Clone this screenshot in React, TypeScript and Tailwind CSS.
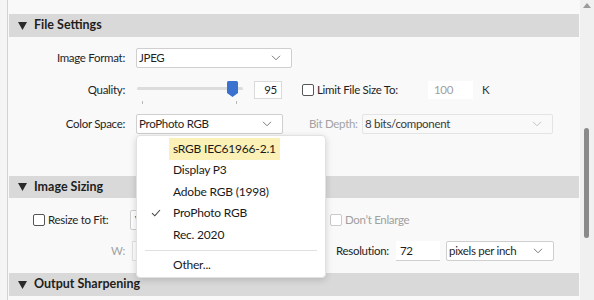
import type { ReactNode } from 'react';

function Chevron({ light = false }: { light?: boolean }) {
  return (
    <svg width="10" height="6" viewBox="0 0 10 6" fill="none" className="shrink-0">
      <path d="M1 0.8l4 4 4-4" stroke={light ? '#c4c4c4' : '#7a7a7a'} strokeWidth="1" />
    </svg>
  );
}

function Select({ value, className, disabled = false }: { value: string; className: string; disabled?: boolean }) {
  return (
    <div
      className={`h-[20px] flex items-center justify-between pl-[2px] pr-[10px] border rounded-[2px] overflow-hidden shrink-0 ${
        disabled ? 'bg-[#f9f9f9] border-[#e4e4e4] text-[#3a3a3a]' : 'bg-white border-[#cfcfcf]'
      } ${className}`}
    >
      <span className="leading-[16px] whitespace-nowrap">{value}</span>
      <Chevron light={disabled} />
    </div>
  );
}

function Checkbox({ disabled = false }: { disabled?: boolean }) {
  return (
    <span
      className={`w-[12px] h-[12px] rounded-[2px] border bg-white shrink-0 ${
        disabled ? 'border-[#c9c9c9]' : 'border-[#555]'
      }`}
    />
  );
}

function Header({ title }: { title: string }) {
  return (
    <div className="flex items-center gap-[7px] pl-[9px] bg-[#d9d9d9] h-full font-bold text-[12.5px] tracking-normal text-[#1e1e1e]">
      <svg width="9" height="8" viewBox="0 0 9 8">
        <path d="M0 0h9L4.5 8z" fill="#2a2a2a" />
      </svg>
      {title}
    </div>
  );
}

function Label({ children, muted = false }: { children: ReactNode; muted?: boolean }) {
  return <span className={`w-[116px] text-right shrink-0 ${muted ? 'text-[#a3a3a3]' : ''}`}>{children}</span>;
}

const colorSpaces = ['sRGB IEC61966-2.1', 'Display P3', 'Adobe RGB (1998)', 'ProPhoto RGB', 'Rec. 2020'];

function Menu() {
  return (
    <div className="absolute left-[128px] top-[135px] w-[190px] h-[143px] bg-white rounded-[4px] border border-[#e2e2e2] shadow-[0_2px_7px_rgba(0,0,0,0.16)] pt-[2px] text-[12px] tracking-[-0.2px] text-[#1a1a1a]">
      {colorSpaces.map((name) => (
        <div key={name} className="h-[21.5px] flex items-center">
          <span className="w-[32px] flex justify-center pl-[5px]">
            {name === 'ProPhoto RGB' && (
              <svg width="10" height="8" viewBox="0 0 10 8" fill="none">
                <path d="M1 4.2l2.8 2.6L9 1" stroke="#444" strokeWidth="1.1" />
              </svg>
            )}
          </span>
          <span
            className={`h-full flex items-center px-[4px] ${
              name === 'sRGB IEC61966-2.1' ? 'bg-[#fbf0b5]' : ''
            }`}
          >
            {name}
          </span>
        </div>
      ))}
      <div className="mx-[8px] mt-[4px] border-t border-[#e0e0e0]" />
      <div className="h-[21px] mt-[4px] flex items-center pl-[36px]">Other...</div>
    </div>
  );
}

export default function App() {
  return (
    <div className="w-[594px] h-[300px] flex overflow-hidden bg-[#f9f9f9] text-[11.5px] tracking-[-0.3px] text-[#1f1f1f] font-['Lato',sans-serif] leading-none">
      <div className="w-[8px] bg-[#f5f5f5] border-r border-[#d2d2d2]" />

      <div className="relative w-[572px] flex flex-col px-[1px]">
        <div className="h-[14px] shrink-0" />
        <div className="h-[23px] shrink-0">
          <Header title="File Settings" />
        </div>

        <div className="h-[139px] shrink-0 pt-[11px] flex flex-col">
          <div className="h-[20px] flex items-center gap-[11px]">
            <Label>Image Format:</Label>
            <Select value="JPEG" className="w-[156px]" />
          </div>

          <div className="h-[20px] mt-[12px] flex items-center">
            <Label>Quality:</Label>
            <div className="relative ml-[12px] w-[106px] h-[20px] shrink-0">
              <div className="absolute left-0 right-0 top-[7px] h-[3px] bg-[#dcdcdc] rounded-full" />
              <svg className="absolute left-[90px] top-[1px]" width="11" height="16" viewBox="0 0 11 16">
                <path d="M1.5 0h8a1.5 1.5 0 0 1 1.5 1.5V12l-5.5 4L0 12V1.5A1.5 1.5 0 0 1 1.5 0z" fill="#3b71cf" />
              </svg>
              <div className="absolute left-[5px] top-[21px] w-px h-[3px] bg-[#b9b9b9]" />
              <div className="absolute left-[99px] top-[21px] w-px h-[3px] bg-[#b9b9b9]" />
            </div>
            <div className="ml-[11px] w-[28px] h-[18px] bg-white border border-[#dadada] flex items-center justify-end pr-[4px] shrink-0">
              95
            </div>
            <div className="ml-[20px] w-[126px] flex items-center gap-[3px] shrink-0">
              <Checkbox />
              <span>Limit File Size To:</span>
            </div>
            <div className="w-[45px] h-[18px] bg-white flex items-center pl-[6px] text-[#a0a0a0] shrink-0">100</div>
            <span className="ml-[9px] text-[#333]">K</span>
          </div>

          <div className="h-[20px] mt-[14px] flex items-center">
            <Label>Color Space:</Label>
            <Select value="ProPhoto RGB" className="ml-[11px] w-[147px]" />
            <span className="ml-[26px] w-[53px] shrink-0 text-[#a3a3a3]">Bit Depth:</span>
            <Select value="8 bits/component" className="w-[191px]" disabled />
          </div>
        </div>

        <div className="h-[22px] shrink-0">
          <Header title="Image Sizing" />
        </div>

        <div className="h-[75px] shrink-0 pt-[12px] flex flex-col">
          <div className="h-[20px] flex items-center">
            <div className="w-[121px] pl-[24px] flex items-center gap-[3px] shrink-0">
              <Checkbox />
              <span>Resize to Fit:</span>
            </div>
            <Select value="Width & Height" className="w-[160px] pl-[4px]" />
            <div className="ml-[40px] flex items-center gap-[3px] text-[#a0a0a0]">
              <Checkbox disabled />
              <span>Don’t Enlarge</span>
            </div>
          </div>

          <div className="h-[20px] mt-[11px] flex items-center">
            <Label muted>W:</Label>
            <div className="ml-[7px] w-[60px] h-[20px] bg-white border border-[#e2e2e2] shrink-0" />
            <span className="ml-[144px] w-[60px] shrink-0">Resolution:</span>
            <div className="w-[44px] h-[20px] bg-white border-b border-[#cfcfcf] flex items-center pl-[4px] shrink-0">72</div>
            <Select value="pixels per inch" className="ml-[6px] w-[108px]" />
          </div>
        </div>

        <div className="h-[23px] shrink-0">
          <Header title="Output Sharpening" />
        </div>

        <Menu />
      </div>

      <div className="relative w-[14px] bg-[#f0f0f0]">
        <svg className="absolute left-[3px] top-[3px]" width="8" height="5" viewBox="0 0 8 5">
          <path d="M0 5L4 0l4 5z" fill="#9a9a9a" />
        </svg>
        <div className="absolute left-[4px] top-[128px] w-[5px] h-[110px] rounded-full bg-[#8a8a8a]" />
      </div>
    </div>
  );
}
